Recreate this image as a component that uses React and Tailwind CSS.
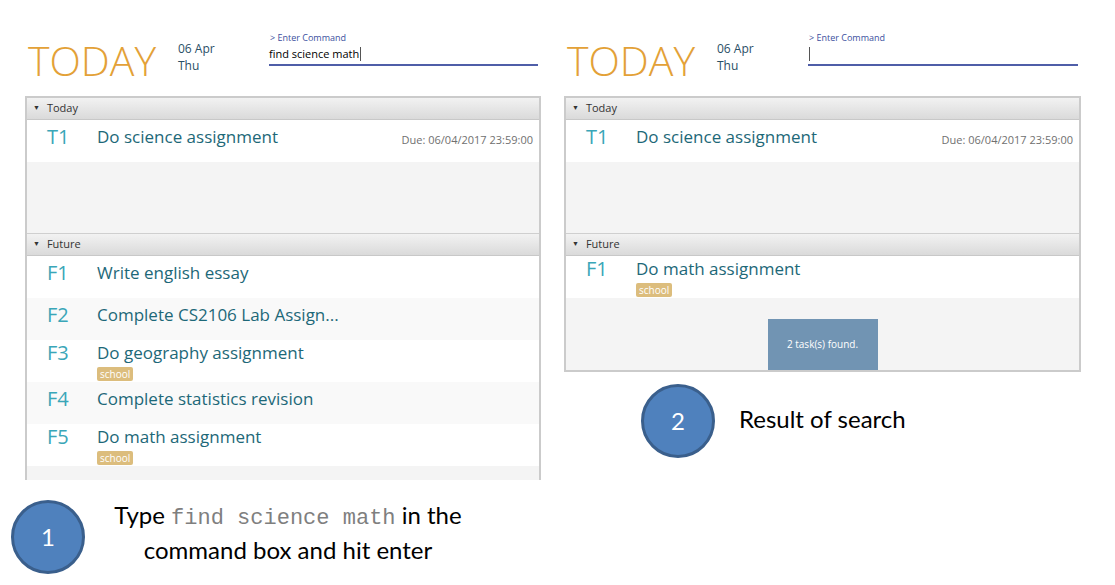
import React from 'react';

const UI = { fontFamily: '"Segoe UI", "Open Sans", "Noto Sans", sans-serif' };
const NOTE = { fontFamily: 'Lato, "Open Sans", sans-serif' };

const SectionBar = ({ label }) => (
  <div className="flex h-[22px] items-center border-b border-[#c8c8c8] bg-gradient-to-b from-[#f2f2f2] to-[#dadada] pl-[6px] text-[11px] text-[#333]">
    <span className="mr-[7px] text-[7px]">▼</span>
    {label}
  </div>
);

const TaskRow = ({ id, title, due, tag, shade }) => (
  <div className={`relative flex h-[42px] ${shade ? 'bg-[#f9f9f9]' : 'bg-white'} ${tag ? 'pt-[1px]' : 'pt-[5px]'}`}>
    <div className="w-[70px] pl-[20px] text-[20px] leading-[24px] text-[#3aa6b8]">{id}</div>
    <div className="flex flex-col items-start">
      <div className="text-[17px] leading-[24px] text-[#1d6878]">{title}</div>
      {tag ? (
        <span className="mt-[2px] rounded-[2px] bg-[#dcbd7d] px-[3px] text-[10px] leading-[14px] text-white">{tag}</span>
      ) : null}
    </div>
    {due ? (
      <div className="absolute right-[6px] top-[12px] text-[11px] text-[#707070]">{due}</div>
    ) : null}
  </div>
);

const Header = ({ command }) => (
  <div className="flex h-[96px] items-start" style={UI}>
    <div className="mt-[35px] w-[153px] pl-[3px] text-[41px] font-light leading-[50px] text-[#e3a137]">TODAY</div>
    <div className="mt-[40px] w-[91px] text-[12px] leading-[17px] text-[#2a4f66]">
      <div>06 Apr</div>
      <div>Thu</div>
    </div>
    <div className="mt-[32px] flex-1 pr-[3px]">
      <div className="pl-[1px] text-[9px] leading-[12px] text-[#3b4f9e]">&gt; Enter Command</div>
      <div className="flex h-[22px] items-center border-b-2 border-[#4f5ea8] text-[11px] text-black">
        {command}
        <span className="ml-[1px] inline-block h-[14px] w-px bg-[#555]"></span>
      </div>
    </div>
  </div>
);

const Circle = ({ n }) => (
  <div
    className="flex h-[74px] w-[74px] shrink-0 items-center justify-center rounded-full border-[3px] border-[#3a5f8c] bg-[#4f81bd] text-[24px] text-white"
    style={NOTE}
  >
    {n}
  </div>
);

export default function App() {
  return (
    <div className="flex h-[585px] w-[1115px] gap-[23px] overflow-hidden bg-white" style={UI}>
      <div className="flex w-[541px] flex-col">
        <div className="pl-[25px]">
          <Header command="find science math" />
          <div className="h-[384px] overflow-hidden border-x-2 border-t-2 border-[#cbcbcb]">
            <SectionBar label="Today" />
            <TaskRow id="T1" title="Do science assignment" due="Due: 06/04/2017 23:59:00" />
            <div className="h-[72px] border-b border-[#cfcfcf] bg-[#f4f4f4]"></div>
            <SectionBar label="Future" />
            <TaskRow id="F1" title="Write english essay" />
            <TaskRow id="F2" title="Complete CS2106 Lab Assign..." shade />
            <TaskRow id="F3" title="Do geography assignment" tag="school" />
            <TaskRow id="F4" title="Complete statistics revision" shade />
            <TaskRow id="F5" title="Do math assignment" tag="school" />
            <div className="h-[40px] bg-[#f4f4f4]"></div>
          </div>
        </div>
        <div className="mt-[19px] flex items-center pl-[11px]">
          <Circle n="1" />
          <div className="mb-[10px] flex-1 pr-[50px] text-center text-[24px] leading-[31px] text-black" style={NOTE}>
            <div>
              Type{' '}
              <span className="text-[22px] text-[#7f7f7f]" style={{ fontFamily: '"Liberation Mono", monospace' }}>
                find science math
              </span>{' '}
              in the
            </div>
            <div>command box and hit enter</div>
          </div>
        </div>
      </div>

      <div className="flex w-[517px] flex-col">
        <Header command="" />
        <div className="relative h-[276px] border-2 border-[#cbcbcb]">
          <SectionBar label="Today" />
          <TaskRow id="T1" title="Do science assignment" due="Due: 06/04/2017 23:59:00" />
          <div className="h-[72px] border-b border-[#cfcfcf] bg-[#f4f4f4]"></div>
          <SectionBar label="Future" />
          <TaskRow id="F1" title="Do math assignment" tag="school" />
          <div className="h-[72px] bg-[#f4f4f4]"></div>
          <div className="absolute bottom-0 left-1/2 flex h-[51px] w-[110px] -translate-x-1/2 items-center justify-center bg-[#7194b3] text-[10px] text-white">
            2 task(s) found.
          </div>
        </div>
        <div className="mt-[12px] flex items-center pl-[77px]">
          <Circle n="2" />
          <div className="ml-[24px] mb-[4px] text-[24px] text-black" style={NOTE}>
            Result of search
          </div>
        </div>
      </div>
    </div>
  );
}
